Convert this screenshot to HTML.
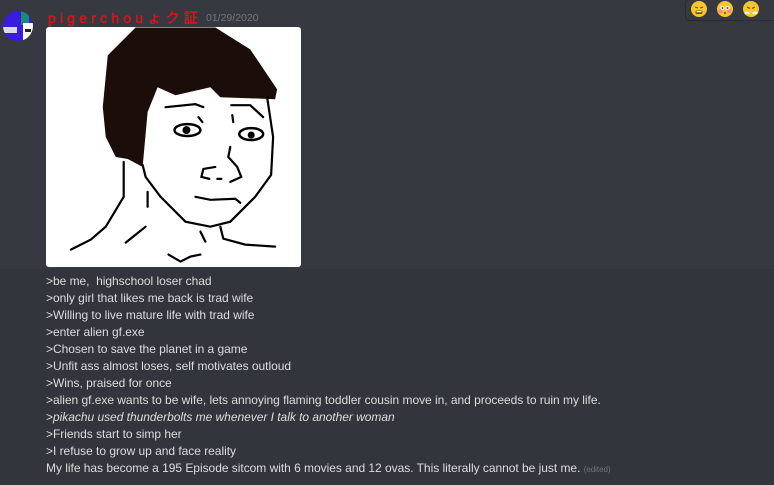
<!DOCTYPE html>
<html><head><meta charset="utf-8"><style>
html,body{margin:0;padding:0;width:774px;height:485px;overflow:hidden;background:#32353b;font-family:"Liberation Sans","Noto Sans CJK JP",sans-serif}
.top{position:absolute;left:0;top:0;width:774px;height:269px;background:#36393f}
.av{position:absolute;left:3px;top:11px;width:30px;height:30px;border-radius:50%;overflow:hidden;background:#3a1ce0}
.name{position:absolute;left:48px;top:8px;color:#e0121b;font-size:14px;letter-spacing:4.2px;white-space:nowrap;-webkit-text-stroke:0.4px #e0121b}
.date{position:absolute;left:206px;top:12px;color:#72767d;font-size:10.5px}
.img{position:absolute;left:46px;top:27px;width:255px;height:240px;background:#fff;border-radius:3px;overflow:hidden}
.txt{position:absolute;left:46px;top:273px;color:#dcddde;font-size:12px;line-height:17px;white-space:nowrap;letter-spacing:-0.03px}
.ed{font-size:8px;color:#72767d}
.pop{position:absolute;left:685px;top:-1px;width:95px;height:20px;border:1px solid #2a2c31;border-radius:4px;background:#36393f}
.em{position:absolute;top:1px;width:16px;height:16px}
</style></head><body>
<div class="top"></div>
<div class="av"><svg width="30" height="30"><rect x="18" y="0" width="8" height="14" fill="#1a8a7a"/><rect x="20" y="12" width="10" height="18" fill="#fff"/><rect x="0" y="16" width="14" height="6" fill="#d9d9e8"/><rect x="22" y="18" width="6" height="3" fill="#222"/></svg></div>
<div class="name">pigerchouょク証</div>
<div class="date">01/29/2020</div>
<div class="img"><svg width="255" height="240" viewBox="0 0 256 240">
<path d="M62,28 L90,0 L170,0 L205,22 L232,62 L230,72 L175,70 L165,60 L130,68 L112,60 L102,85 L97,140 L82,132 L70,130 L60,110 L57,80 Z" fill="#1a0d0a"/>
<g fill="none" stroke="#000" stroke-width="2.2" stroke-linecap="round">
<path d="M222,70 L228,110 L226,148 L210,170 L185,195 L165,200 L140,195 L115,170 L100,150 L97,138"/>
<path d="M78,135 L78,170 L60,200 L45,213 L25,223"/>
<path d="M100,200 L85,212 L80,216"/>
<path d="M175,200 L178,212 L200,218 L230,220"/>
<path d="M120,80 L150,77 L158,80"/><path d="M186,78 L205,78 L218,90"/>
<path d="M153,90 L157,95"/><path d="M187,88 L188,95"/>
<path d="M185,120 L183,130 L192,140 L196,150 L185,155"/>
<path d="M170,140 L158,142 L156,150 L164,152"/><path d="M172,152 L176,152"/>
<path d="M150,170 L165,173 L190,172 L195,176"/>
<path d="M155,205 L160,215"/><path d="M123,228 L135,235 L145,230 L155,228"/>
<path d="M102,165 L102,180"/>
</g>
<ellipse cx="142" cy="103" rx="13" ry="6" fill="none" stroke="#000" stroke-width="2.5"/><circle cx="141" cy="103" r="4" fill="#000"/>
<ellipse cx="206" cy="107" rx="12" ry="6" fill="none" stroke="#000" stroke-width="2.5"/><circle cx="206" cy="108" r="3.5" fill="#000"/>
</svg></div>
<div class="txt">&gt;be me,&nbsp; highschool loser chad<br>&gt;only girl that likes me back is trad wife<br>&gt;Willing to live mature life with trad wife<br>&gt;enter alien gf.exe<br>&gt;Chosen to save the planet in a game<br>&gt;Unfit ass almost loses, self motivates outloud<br>&gt;Wins, praised for once<br>&gt;alien gf.exe wants to be wife, lets annoying flaming toddler cousin move in, and proceeds to ruin my life.<br>&gt;<i>pikachu used thunderbolts me whenever I talk to another woman</i><br>&gt;Friends start to simp her<br>&gt;I refuse to grow up and face reality<br>My life has become a 195 Episode sitcom with 6 movies and 12 ovas. This literally cannot be just me. <span class="ed">(edited)</span></div>
<div class="pop">
<svg class="em" style="left:5px" viewBox="0 0 16 16"><circle cx="8" cy="8" r="8" fill="#f9c531"/><path d="M4,6 L7,7 M12,6 L9,7" stroke="#6b4a0e" stroke-width="1"/><rect x="4.5" y="9.5" width="7" height="3.5" rx="1.5" fill="#6b4a0e"/><rect x="5.5" y="10" width="5" height="1.3" fill="#fff"/></svg>
<svg class="em" style="left:31px" viewBox="0 0 16 16"><circle cx="8" cy="8" r="8" fill="#f9c531"/><circle cx="3.5" cy="10" r="2.2" fill="#f4889a"/><circle cx="12.5" cy="10" r="2.2" fill="#f4889a"/><circle cx="5.5" cy="7" r="2" fill="#fff"/><circle cx="10.5" cy="7" r="2" fill="#fff"/><circle cx="5.5" cy="7" r="1" fill="#6b4a0e"/><circle cx="10.5" cy="7" r="1" fill="#6b4a0e"/><circle cx="8" cy="12" r="1" fill="#6b4a0e"/></svg>
<svg class="em" style="left:57px" viewBox="0 0 16 16"><circle cx="8" cy="8" r="8" fill="#f9c531"/><path d="M4,6 L7,7.5 M12,6 L9,7.5" stroke="#6b4a0e" stroke-width="1"/><path d="M2,13 Q4,10 6,13 M10,13 Q12,10 14,13" stroke="#fff" stroke-width="2" fill="none"/></svg>
</div>
</body></html>
